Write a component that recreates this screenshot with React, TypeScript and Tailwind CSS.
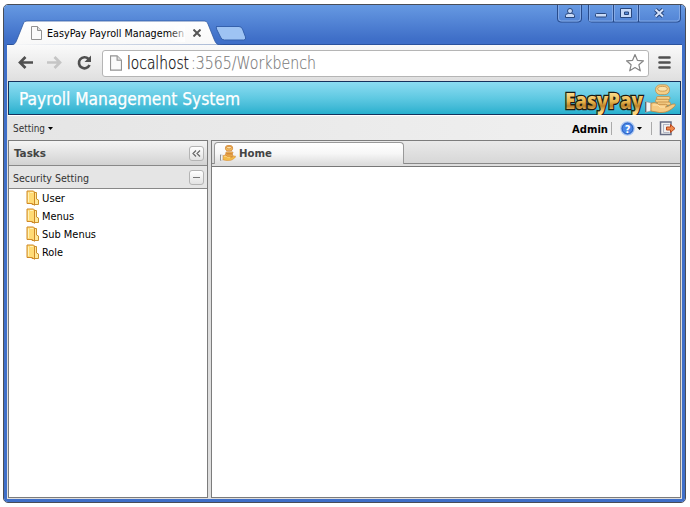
import type { ReactNode } from "react";

function Label({ children, width, className = "" }: { children: string; width: number; className?: string }) {
  const bold = className.includes("font-bold");
  return (
    <svg className={"block shrink-0 overflow-visible " + className} style={{ width }} height="16">
      <text
        x="0"
        y="12"
        textLength={width}
        lengthAdjust="spacingAndGlyphs"
        fill="currentColor"
        fontWeight={bold ? 700 : 400}
      >
        {children}
      </text>
    </svg>
  );
}

function PageIcon({ className = "" }: { className?: string }) {
  return (
    <svg className={"shrink-0 " + className} viewBox="0 0 11 14" fill="#fafafa" stroke="#929292">
      <path d="M.5 .5h6l4 4v9H.5z" />
      <path d="M6.5 .5v4h4" fill="#ddd" />
    </svg>
  );
}

function HandCoins({ className = "", orange = false }: { className?: string; orange?: boolean }) {
  const stroke = orange ? "#cf7a28" : "#c0873c";
  return (
    <svg className={"shrink-0 " + className} viewBox="0 0 31 29" preserveAspectRatio="none">
      <g fill={orange ? "#f6c765" : "#f5cf88"} stroke={stroke} strokeWidth={orange ? 1.4 : 0.7}>
        <rect x="10.500" y=".8" width="14" height="9.800" rx="4.800" />
        <ellipse cx="17.500" cy="4.800" rx="4.800" ry="2.400" fill="#fbe3ab" />
        <rect x="11.500" y="12.500" width="13.500" height="3" rx="1.400" />
        <rect x="10.500" y="15.300" width="13.500" height="3" rx="1.400" />
        <rect x="12" y="18.100" width="13.500" height="3" rx="1.400" />
      </g>
      <path d="M0 17.500l6 1.200v8.300L0 28.500z" fill="#f3f3f3" stroke="#8f8f8f" strokeWidth=".6" />
      <path d="M.7 18v10" stroke="#5d6670" strokeWidth="1.400" />
      <path
        d="M6 19.300c3-1 5-1 7.500 1h7c2 0 2 2.500 0 2.700 4-.5 6-3.500 9-3 2 .5 0 3-3 5-4 3-7 3.500-12 3.500l-8.500-1.500z"
        fill={orange ? "#f3bb48" : "#f5ca82"}
        stroke={stroke}
        strokeWidth=".8"
      />
      <path d="M8 21h5l2 2h5" fill="none" stroke="#ffe5ae" />
    </svg>
  );
}

function Folder() {
  return (
    <svg className="h-4 w-[13px] shrink-0" viewBox="0 0 13 16">
      <path d="M7 2.500h3.500v6.500l2 1v4.500H6z" fill="#ffe99a" stroke="#c9922e" />
      <path d="M1 1h6.500l1 1v13.300L6 13.500H1z" fill="#ffdb75" stroke="#cf8928" strokeLinejoin="round" />
      <path d="M2.500 2.500v9.500M4 2.500h3" stroke="#fff2b8" />
    </svg>
  );
}

function ToolButton({ children }: { children: ReactNode }) {
  return (
    <div className="flex h-[15px] w-[15px] items-center justify-center rounded-[3px] border border-[#b4b4b4] bg-linear-to-b from-white to-[#e2e2e2]">
      {children}
    </div>
  );
}

function TitleBar() {
  return (
    <header className="relative h-10 shrink-0">
      <svg className="absolute -left-1 top-0" width="683" height="40" fill="none">
        <defs>
          <linearGradient id="tab" x1="0" y1="0" x2="0" y2="1">
            <stop stopColor="#fff" />
            <stop offset="1" stopColor="#f8f8f8" />
          </linearGradient>
        </defs>
        <path d="M4 39.5h675" stroke="#2b529d" />
        <path
          d="M4 40.5c7 0 8-1 10-6l6-15c1-3 2-3.500 5-3.500h175c3 0 4 .5 5 3l6 15c2 5 3 6 9 6z"
          fill="url(#tab)"
          stroke="#31599f"
          strokeWidth=".8"
        />
        <path d="M213 21.5h23q2.500 0 3.500 2.500l3 8q1 3-2 3h-19q-3 0-4-3l-4-8q-1-2.500 1-2.500z" fill="#9ec3f3" stroke="#3561ad" />
        <g transform="translate(1 0)">
          <g stroke="#284b8a">
            <path d="M553.500 0v14q0 3 3 3h18q3 0 3-3V0M584.500 0v14q0 3 3 3h86q3 0 3-3V0M609.500 0v17M634.500 0v17" />
            <path d="M554.500 0v13q0 3 3 3h16q3 0 3-3V0M585.500 0v16h23V0M610.500 0v16h23V0M635.500 0v16h37q3 0 3-3V0" stroke="#83a9e5" />
          </g>
          <g fill="#c8daf7" stroke="#28477d">
            <path d="M561.500 12.500v-2q0-2 3-2h3q3 0 3 2v2z" />
            <circle cx="566" cy="6" r="2.500" />
            <rect x="591.500" y="8.500" width="11" height="3.500" rx="1" />
            <path fillRule="evenodd" d="M616.500 3.500h11v9h-11zM620.500 7h4v2.500h-4z" />
          </g>
          <path d="M651.500 4.500l7.500 7M659 4.500l-7.500 7" stroke="#28477d" strokeWidth="4" />
          <path d="M651.500 4.500l7.500 7M659 4.500l-7.500 7" stroke="#d7e4fb" strokeWidth="2" />
        </g>
      </svg>
      <div className="relative flex h-full items-start pl-[24px] pt-[21px]">
        <PageIcon className="h-[14px] w-[11px]" />
        <div className="relative ml-[5px] h-4 w-[138px]">
          <Label width={137} className="-mt-px text-[11px] text-black">EasyPay Payroll Managemen</Label>
          <div className="absolute inset-y-0 right-0 w-4 bg-linear-to-r from-transparent to-white/80" />
        </div>
        <svg className="ml-[8px] mt-[3px]" width="8" height="8" stroke="#555" strokeWidth="2"><path d="M.5 .5l7 7M7.500 .5l-7 7" /></svg>
      </div>
    </header>
  );
}

function Toolbar() {
  return (
    <div className="flex h-9 shrink-0 items-center bg-linear-to-b from-[#fafafa] to-[#dfdfdf]">
      <svg className="-mt-0.5 ml-[11px] shrink-0" width="74" height="18" fill="none" strokeWidth="2.700">
        <path d="M15 9.500H2M7.500 4l-5.500 5.500 5.500 5.500" stroke="#505050" />
        <path d="M29 9.500h13M36.500 4l5.500 5.500-5.500 5.500" stroke="#c5c5c5" />
        <path d="M70.500 6a5.500 5.500 0 1 0 1 6" stroke="#505050" />
        <path d="M73 2.500v6.500h-6.500z" fill="#505050" />
      </svg>
      <div className="ml-[10px] flex h-[27px] w-[547px] items-center rounded-[3px] border border-[#b5b5b5] bg-white pl-[7px] pr-[3px]">
        <PageIcon className="h-4 w-3" />
        <div className="ml-[5px] flex h-6 items-start text-[17px] font-extralight">
          <svg className="block h-6 w-[62px] overflow-visible" fontFamily="DejaVu Sans">
            <text y="18" textLength="62" lengthAdjust="spacingAndGlyphs" fill="#111" stroke="#111" strokeWidth=".25">localhost</text>
          </svg>
          <svg className="ml-[2px] block h-6 w-[125px] overflow-visible" fontFamily="DejaVu Sans">
            <text y="18" textLength="125" lengthAdjust="spacingAndGlyphs" fill="#777" stroke="#777" strokeWidth=".15">:3565/Workbench</text>
          </svg>
        </div>
        <svg className="ml-auto" width="20" height="20" fill="#fff" stroke="#858585" strokeWidth="1.200" strokeLinejoin="round">
          <path d="M10 1.500l2.400 5.800 6.100.5-4.600 4 1.400 6-5.300-3.200-5.300 3.200 1.400-6-4.600-4 6.100-.5z" />
        </svg>
      </div>
      <svg className="-mt-0.5 ml-[9px]" width="13" height="13" stroke="#505050" strokeWidth="2.600" strokeLinecap="round"><path d="M1.500 1.500h10M1.500 6.500h10M1.500 11.500h10" /></svg>
    </div>
  );
}

function Banner() {
  return (
    <div className="ml-px flex h-[34px] w-[673px] shrink-0 items-start border border-[#15315c] bg-linear-to-b from-[#8bdcf2] via-[#5fc9e2] to-[#25b0ce]">
      <svg className="ml-[9px] block h-8 w-56 overflow-visible text-[17px]">
        <text x="1" y="23" textLength="221" lengthAdjust="spacingAndGlyphs" fill="#fff" stroke="#fff" strokeWidth=".25">Payroll Management System</text>
      </svg>
      <svg className="ml-auto mt-[8px] h-6 w-[80px] shrink-0 overflow-visible font-bold">
        <defs>
          <linearGradient id="gold" x1="0" y1="0" x2="0" y2="1">
            <stop offset=".2" stopColor="#ffe39a" /><stop offset=".55" stopColor="#e8b64e" /><stop offset=".7" stopColor="#ba8129" /><stop offset=".9" stopColor="#ffd780" />
          </linearGradient>
        </defs>
        <text x="0" y="19" fontFamily="Open Sans" fontWeight="800" fontSize="22" textLength="78" lengthAdjust="spacingAndGlyphs" fill="url(#gold)" stroke="#1c1a12" strokeWidth="2.600" paintOrder="stroke">EasyPay</text>
      </svg>
      <HandCoins className="mr-[4px] mt-[2px] h-[29px] w-[31px]" />
    </div>
  );
}

function MenuBar() {
  return (
    <div className="ml-px flex h-[25px] w-[673px] shrink-0 items-center border-t border-white bg-linear-to-r from-[#e5e5e5] to-[#f1f1f1] pl-[5px] pr-[5px] text-[11px]">
      <Label width={32} className="text-[#333]">Setting</Label>
      <svg className="ml-[3px]" width="5" height="3"><path d="M0 0h5L2.500 3z" /></svg>
      <div className="ml-auto flex items-center">
        <Label width={36} className="mt-px font-bold text-black">Admin</Label>
        <div className="ml-[3px] h-[13px] w-px bg-[#aaa]" />
        <svg className="ml-[8px]" width="15" height="15">
          <circle cx="7.500" cy="7.500" r="6.500" fill="#4a86e6" stroke="#a7c5f4" strokeWidth="1.500" />
          <circle cx="7.500" cy="7.500" r="5.500" fill="none" stroke="#245bbd" />
          <text x="7.500" y="11.500" textAnchor="middle" fontSize="11" fontWeight="700" fill="#fff">?</text>
        </svg>
        <svg className="ml-[2px]" width="5" height="3"><path d="M0 0h5L2.500 3z" /></svg>
        <div className="ml-[9px] h-[13px] w-px bg-[#aaa]" />
        <svg className="ml-[7px]" width="17" height="15" fill="none">
          <path d="M12 4V1H1.500v12.500H12V11" stroke="#666b82" strokeWidth="1.500" />
          <path d="M4.500 3.500h6M4.500 3v8.500h6" stroke="#b3b6c4" />
          <path d="M7.500 6h4V3.500l4.500 4-4.500 4V9h-4z" fill="#f08a4b" stroke="#b7461c" />
        </svg>
      </div>
    </div>
  );
}

function Sidebar() {
  return (
    <aside className="flex w-[200px] shrink-0 flex-col border border-[#7c7c7c] bg-white">
      <div className="flex h-[25px] shrink-0 items-center justify-between border-b border-[#888] bg-linear-to-b from-[#f5f5f5] to-[#d2d2d2] pl-[5px] pr-[3px]">
        <Label width={32} className="text-[11px] font-bold text-[#444]">Tasks</Label>
        <ToolButton><svg width="9" height="7" fill="none" stroke="#666" strokeWidth="1.200"><path d="M4 .5l-3 3 3 3M8 .5l-3 3 3 3" /></svg></ToolButton>
      </div>
      <div className="flex h-[23px] shrink-0 items-center justify-between border-b border-[#888] bg-[#e5e5e5] pl-[4px] pr-[3px]">
        <Label width={76} className="mt-px text-[11px] text-[#333]">Security Setting</Label>
        <ToolButton><div className="h-px w-[7px] bg-[#777]" /></ToolButton>
      </div>
      <ul className="text-[11px] text-black">
        <li className="flex h-[18px] items-center gap-[3px] pl-[17px]"><Folder /><Label width={23}>User</Label></li>
        <li className="flex h-[18px] items-center gap-[3px] pl-[17px]"><Folder /><Label width={32}>Menus</Label></li>
        <li className="flex h-[18px] items-center gap-[3px] pl-[17px]"><Folder /><Label width={54}>Sub Menus</Label></li>
        <li className="flex h-[18px] items-center gap-[3px] pl-[17px]"><Folder /><Label width={21}>Role</Label></li>
      </ul>
    </aside>
  );
}

function MainPanel() {
  return (
    <main className="flex flex-1 flex-col border border-[#7c7c7c] bg-white">
      <div className="flex h-[26px] shrink-0 flex-col border-b border-[#777] bg-[#dedede]">
        <div className="flex h-[23px] border-b border-[#888] bg-linear-to-b from-[#e9e9e9] to-[#d7d7d7] pl-[2px]">
          <div className="mt-px flex h-[22px] w-[190px] items-center rounded-t-[4px] border border-b-0 border-[#999] bg-linear-to-b from-white via-[#f7f7f7] to-[#dedede] pl-[5px]">
            <HandCoins orange className="-mt-0.5 h-4 w-4" />
            <Label width={33} className="-mt-0.5 ml-[3px] text-[11px] font-bold text-[#444]">Home</Label>
          </div>
        </div>
      </div>
    </main>
  );
}

export default function App() {
  return (
    <div className="h-[507px] w-[690px] overflow-hidden bg-white pl-[3px] pt-1 font-['DejaVu_Sans_Condensed','DejaVu_Sans','Noto_Sans',sans-serif]">
      <div className="flex h-[499px] w-[683px] flex-col overflow-hidden rounded-[5px] border border-[#484d57] bg-[#3f70c9]">
        <div className="flex h-full flex-col bg-[linear-gradient(#6699e2_0px,#3f6fc8_34px,#3f6fc8_100%)] px-[3px] pb-[3px]">
          <TitleBar />
          <div className="flex min-h-0 flex-1 flex-col bg-[#dfdfdf]">
            <Toolbar />
            <Banner />
            <MenuBar />
            <div className="ml-px mb-px flex min-h-0 w-[673px] flex-1">
              <Sidebar />
              <div className="w-[3px] shrink-0 bg-[#dedede]" />
              <MainPanel />
            </div>
          </div>
        </div>
      </div>
    </div>
  );
}
